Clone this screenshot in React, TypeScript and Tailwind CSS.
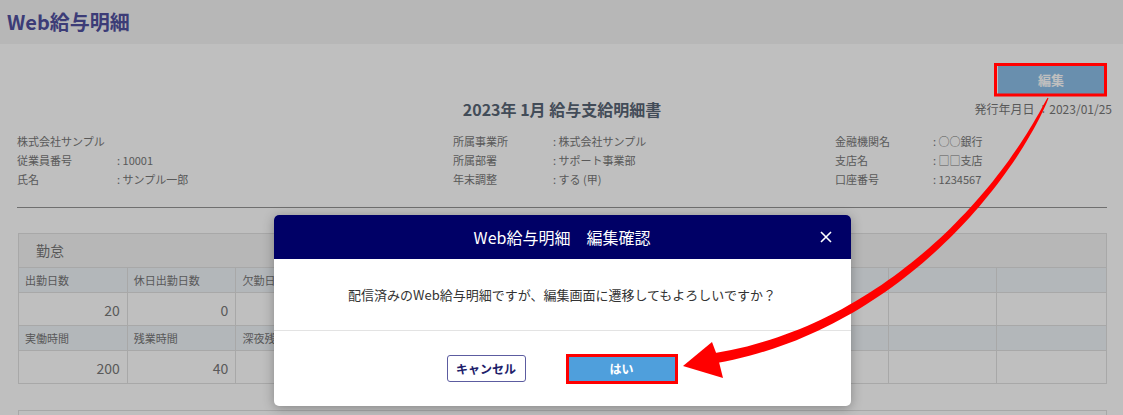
import React from 'react';

const FONT = "font-['Noto_Sans_CJK_JP','Noto_Sans',sans-serif]";

const infoColumns: [string, string | null][][] = [
  [
    ['株式会社サンプル', null],
    ['従業員番号', '10001'],
    ['氏名', 'サンプル一郎'],
  ],
  [
    ['所属事業所', '株式会社サンプル'],
    ['所属部署', 'サポート事業部'],
    ['年末調整', 'する (甲)'],
  ],
  [
    ['金融機関名', '○○銀行'],
    ['支店名', '□□支店'],
    ['口座番号', '1234567'],
  ],
];

const attendance = [
  {
    labels: ['出勤日数', '休日出勤日数', '欠勤日数', '', '', '', '', '', '', ''],
    values: ['20', '0', '', '', '', '', '', '', '', ''],
  },
  {
    labels: ['実働時間', '残業時間', '深夜残業時間', '', '', '', '', '', '', ''],
    values: ['200', '40', '', '', '', '', '', '', '', ''],
  },
];

// cubic bezier helpers for the tapered annotation arrow
const bez = (t: number, a: number, b: number, c: number, d: number) =>
  (1 - t) ** 3 * a + 3 * (1 - t) ** 2 * t * b + 3 * (1 - t) * t * t * c + t ** 3 * d;
const bezD = (t: number, a: number, b: number, c: number, d: number) =>
  3 * (1 - t) ** 2 * (b - a) + 6 * (1 - t) * t * (c - b) + 3 * t * t * (d - c);

const arrowPath = () => {
  const xs = [1048, 1000, 880, 716];
  const ys = [98, 200, 330, 358];
  const left: string[] = [];
  const right: string[] = [];
  const steps = 60;
  for (let i = 0; i <= steps; i++) {
    const t = i / steps;
    const x = bez(t, xs[0], xs[1], xs[2], xs[3]);
    const y = bez(t, ys[0], ys[1], ys[2], ys[3]);
    const dx = bezD(t, xs[0], xs[1], xs[2], xs[3]);
    const dy = bezD(t, ys[0], ys[1], ys[2], ys[3]);
    const len = Math.hypot(dx, dy) || 1;
    const nx = -dy / len;
    const ny = dx / len;
    const w = (1 + 9 * Math.pow(t, 0.55)) / 2;
    left.push(`${(x + nx * w).toFixed(1)},${(y + ny * w).toFixed(1)}`);
    right.push(`${(x - nx * w).toFixed(1)},${(y - ny * w).toFixed(1)}`);
  }
  return `M${left.join(' L')} L${right.reverse().join(' L')} Z`;
};

const Header: React.FC = () => (
  <div className="flex h-[44px] items-center bg-[#f5f5f5] pl-[7px]">
    <h1 className="text-[20px] font-bold leading-none text-[#50509f]">Web給与明細</h1>
  </div>
);

const InfoBlock: React.FC = () => (
  <div className="mt-[11px] grid grid-cols-[436px_382px_1fr] text-[11px] leading-[19px] text-[#777]">
    {infoColumns.map((col, ci) => (
      <div key={ci}>
        {col.map(([label, value]) => (
          <div key={label} className="flex">
            <span className={ci === 2 ? 'w-[98px]' : 'w-[100px]'}>{label}</span>
            {value !== null && <span>:&nbsp;{value}</span>}
          </div>
        ))}
      </div>
    ))}
  </div>
);

const AttendanceTable: React.FC = () => (
  <div className="ml-px mt-[25px] border border-[#e0e0e0]">
    <div className="flex h-[33px] items-center bg-[#f5f5f5] pl-[17px] text-[14px] text-[#777]">勤怠</div>
    {attendance.map((row, ri) => (
      <React.Fragment key={ri}>
        <div className="grid grid-cols-10 border-t border-[#e0e0e0] bg-[#eff5f9]">
          {row.labels.map((l, i) => (
            <div key={i} className="h-[24px] border-r border-[#e0e0e0] px-[6px] text-[11px] leading-[24px] text-[#777] last:border-r-0">
              {l}
            </div>
          ))}
        </div>
        <div className="grid grid-cols-10 border-t border-[#e0e0e0]">
          {row.values.map((v, i) => (
            <div key={i} className="h-[32px] border-r border-[#e0e0e0] px-[7px] text-right text-[14px] leading-[34px] text-[#787878] last:border-r-0">
              {v}
            </div>
          ))}
        </div>
      </React.Fragment>
    ))}
  </div>
);

const ConfirmDialog: React.FC = () => (
  <div className="absolute inset-0 z-40 flex justify-center bg-black/25">
    <div className="ml-px mt-[215px] flex h-[191px] w-[577px] flex-col overflow-hidden rounded-[5px] bg-white shadow-[0_2px_12px_rgba(0,0,0,0.3)]">
      <div className="relative flex h-[44px] shrink-0 items-center justify-center bg-[#000066]">
        <h2 className="text-[16px] text-white">Web給与明細　編集確認</h2>
        <button className="absolute right-[19px] top-1/2 -translate-y-1/2 text-white" aria-label="閉じる">
          <svg width="12" height="12" viewBox="0 0 12 12" fill="none" stroke="currentColor" strokeWidth="1.6">
            <path d="M1 1 L11 11 M11 1 L1 11" />
          </svg>
        </button>
      </div>
      <div className="flex h-[72px] shrink-0 items-center justify-center border-b border-[#e3e3e3] text-[13px] text-[#333]">
        配信済みのWeb給与明細ですが、編集画面に遷移してもよろしいですか？
      </div>
      <div className="flex flex-1 items-center justify-center gap-10">
        <button className="h-[27px] w-[79px] rounded-[3px] border border-[#5c5ca0] bg-white text-[12px] font-bold text-[#20206a]">
          キャンセル
        </button>
        <button className="h-[30px] w-[112px] border-[3px] border-[#ff0000] bg-[#4f9fdc] text-[12px] font-bold text-white">
          はい
        </button>
      </div>
    </div>
  </div>
);

const Annotations: React.FC = () => (
  <svg className="pointer-events-none absolute inset-0 z-50" width="1123" height="415" viewBox="0 0 1123 415">
    <rect x="995.5" y="64.5" width="110" height="30.5" fill="none" stroke="#ff0000" strokeWidth="3" />
    <path d={arrowPath()} fill="#ff0000" />
    <polygon points="683,366 712,342 718,358 723,378" fill="#ff0000" />
  </svg>
);

export default function App() {
  return (
    <div className={`relative h-[415px] w-full overflow-hidden bg-white ${FONT}`}>
      <Header />
      <div className="pl-[17px] pr-[16px]">
        <div className="mt-[22px] flex justify-end pr-[3px]">
          <button className="h-[28px] w-[106px] bg-[#8dbfe8] text-[13px] font-bold text-white">編集</button>
        </div>
        <div className="mt-[3px] grid grid-cols-[1fr_auto_1fr] items-center">
          <div />
          <h2 className="text-[16px] font-bold text-[#596676]">2023年 1月 給与支給明細書</h2>
          <div className="mr-[-5px] justify-self-end text-[12px] text-[#777]">発行年月日 ：2023/01/25</div>
        </div>
        <InfoBlock />
        <div className="mt-[18px] border-t border-[#959595]" />
        <AttendanceTable />
        <div className="ml-px mt-[26px] h-[40px] border border-[#e0e0e0]" />
      </div>
      <ConfirmDialog />
      <Annotations />
    </div>
  );
}
